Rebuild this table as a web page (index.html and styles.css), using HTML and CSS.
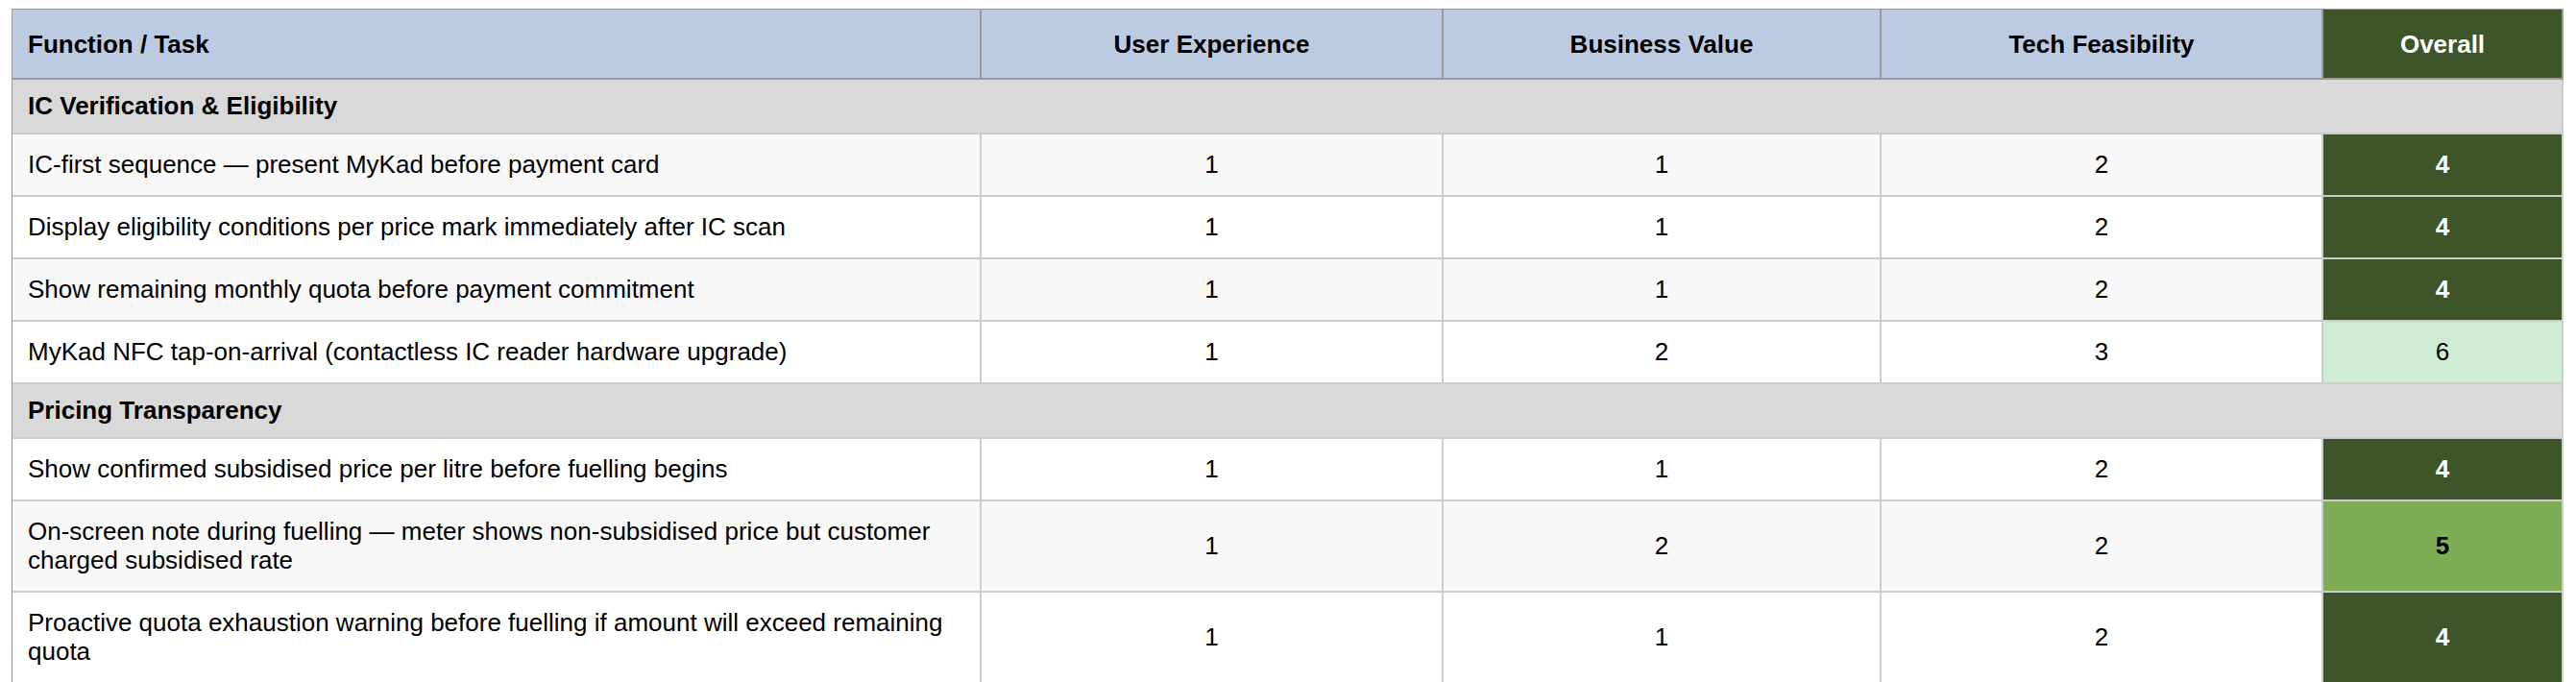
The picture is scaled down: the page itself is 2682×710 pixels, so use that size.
FILE: index.html
```html
<!DOCTYPE html>
<html lang="en">
<head>
<meta charset="utf-8">
<title>Function / Task scoring</title>
<link rel="stylesheet" href="styles.css">
</head>
<body>
<table class="matrix">
  <colgroup>
    <col class="c-task">
    <col class="c-ux">
    <col class="c-bv">
    <col class="c-tf">
    <col class="c-all">
  </colgroup>
  <thead>
    <tr>
      <th class="task">Function / Task</th>
      <th>User Experience</th>
      <th>Business Value</th>
      <th>Tech Feasibility</th>
      <th class="overall-head">Overall</th>
    </tr>
  </thead>
  <tbody>
    <tr class="section"><td colspan="5">IC Verification &amp; Eligibility</td></tr>
    <tr>
      <td class="task">IC-first sequence — present MyKad before payment card</td>
      <td>1</td><td>1</td><td>2</td><td class="score s-dark">4</td>
    </tr>
    <tr>
      <td class="task">Display eligibility conditions per price mark immediately after IC scan</td>
      <td>1</td><td>1</td><td>2</td><td class="score s-dark">4</td>
    </tr>
    <tr>
      <td class="task">Show remaining monthly quota before payment commitment</td>
      <td>1</td><td>1</td><td>2</td><td class="score s-dark">4</td>
    </tr>
    <tr>
      <td class="task">MyKad NFC tap-on-arrival (contactless IC reader hardware upgrade)</td>
      <td>1</td><td>2</td><td>3</td><td class="score s-light">6</td>
    </tr>
    <tr class="section"><td colspan="5">Pricing Transparency</td></tr>
    <tr>
      <td class="task">Show confirmed subsidised price per litre before fuelling begins</td>
      <td>1</td><td>1</td><td>2</td><td class="score s-dark">4</td>
    </tr>
    <tr>
      <td class="task">On-screen note during fuelling — meter shows non-subsidised price but customer charged subsidised rate</td>
      <td>1</td><td>2</td><td>2</td><td class="score s-mid">5</td>
    </tr>
    <tr>
      <td class="task">Proactive quota exhaustion warning before fuelling if amount will exceed remaining quota</td>
      <td>1</td><td>1</td><td>2</td><td class="score s-dark">4</td>
    </tr>
  </tbody>
</table>
</body>
</html>
```

FILE: styles.css
```css
html, body {
  margin: 0;
  padding: 0;
  background: #ffffff;
}

body {
  padding: 9px 0 0 12px;
  font-family: "Liberation Sans", Arial, sans-serif;
  font-size: 26px;
  color: #000000;
}

.matrix {
  table-layout: fixed;
  border-collapse: separate;
  border-spacing: 0;
  width: 2656px;
  border-top: 1px solid #999999;
  border-left: 1px solid #999999;
}

.c-task { width: 1009px; }
.c-ux { width: 481px; }
.c-bv { width: 456px; }
.c-tf { width: 460px; }
.c-all { width: 250px; }

.matrix th,
.matrix td {
  line-height: 30px;
  text-align: center;
  vertical-align: middle;
  border-right: 2px solid #cccccc;
  border-bottom: 2px solid #cccccc;
  padding: 16px 16px 17px 16px;
  overflow: hidden;
}

.matrix th {
  background: #bccbe2;
  font-weight: 700;
  padding-top: 21px;
  padding-bottom: 20px;
  border-right-color: #9a9a9a;
  border-bottom-color: #9a9a9a;
}

.matrix .task {
  text-align: left;
}

.matrix th.overall-head {
  background: #3e5429;
  color: #ffffff;
}

.matrix tbody tr:nth-child(even) td {
  background: #f8f8f8;
}

.matrix tbody tr:nth-child(odd) td {
  background: #ffffff;
}

.matrix tbody tr.section td {
  background: #d9d9d9;
  font-weight: 700;
  text-align: left;
  padding-top: 12px;
  padding-bottom: 13px;
}

.matrix tbody tr td.s-dark {
  background: #3e5429;
  color: #ffffff;
  font-weight: 700;
}

.matrix tbody tr td.s-mid {
  background: #7fad55;
  color: #000000;
  font-weight: 700;
}

.matrix tbody tr td.s-light {
  background: #ceecd3;
  color: #000000;
}
```
